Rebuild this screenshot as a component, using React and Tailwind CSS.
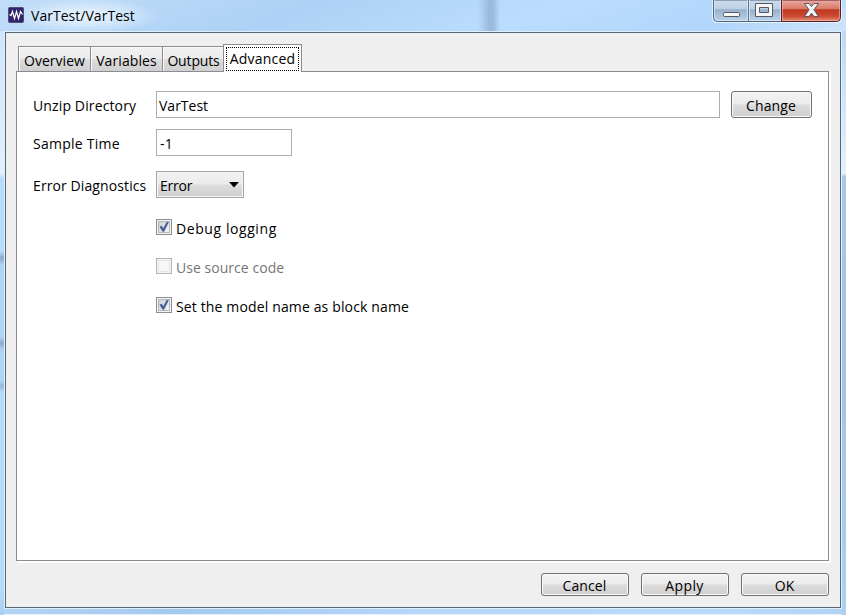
import React from "react";

function Tab({ label, className }) {
  return (
    <div className={`box-border flex h-[25px] items-center justify-center whitespace-nowrap border-t border-l border-[#898c95] bg-[linear-gradient(#f2f2f2,#ebebeb_48%,#dddddd_52%,#cfcfcf)] pt-[4px] shadow-[inset_1px_1px_0_#fafafa] ${className}`}>
      {label}
    </div>
  );
}

function Button({ children, className }) {
  return (
    <button className={`flex items-center justify-center rounded-[3px] border border-[#707070] bg-[linear-gradient(#f3f3f3,#ebebeb_49%,#dddddd_51%,#cfcfcf)] pr-px shadow-[inset_0_0_0_1px_#fafafa] ${className}`}>
      {children}
    </button>
  );
}

function Check({ checked, disabled }) {
  return (
    <span className={`block h-4 w-4 shrink-0 border bg-[#f4f4f4] p-px ${disabled ? "border-[#b1b5b8]" : "border-[#8e8f8f]"}`}>
      <svg width="12" height="12" viewBox="0 0 12 12" className="block">
        <defs>
          <linearGradient id="well" x1="0" y1="0" x2="1" y2="1">
            <stop offset="0" stopColor="#cbcfd5" />
            <stop offset="1" stopColor="#f6f6f6" />
          </linearGradient>
        </defs>
        <rect x=".5" y=".5" width="11" height="11" fill={disabled ? "#f8f8f8" : "url(#well)"} stroke={disabled ? "#e4e5e7" : "#b5bac2"} />
        {checked && <path d="M1.500 5.800 3.800 4.800 5.200 7.300 8.600 1 10.800 1.300 6 10.800H4.600Z" fill="#4a5f97" />}
      </svg>
    </span>
  );
}

export default function App() {
  return (
    <div className="flex h-[615px] w-[846px] flex-col overflow-hidden bg-[linear-gradient(90deg,#c5def7,#b9dcfd_30%,#b5dafd_60%,#b7d6f3)] font-['Open_Sans','Noto_Sans',sans-serif] text-[14px] leading-5 text-black">
      <header className="flex h-[31px] shrink-0 items-start bg-[radial-gradient(ellipse_75px_18px_at_85px_16px,#e3f1ff_20%,transparent),linear-gradient(90deg,transparent_478px,#9bbbdc_489px,#9bbbdc_493px,transparent_500px),linear-gradient(160deg,#c2ddf8,#add2f5_35%,#bbddfd_62%,#b1d6fb_85%,#d0e5fb)] pl-2">
        <svg width="16" height="16" viewBox="0 0 16 16" className="mt-[7px] shrink-0">
          <rect x=".5" y=".5" width="15" height="15" rx="1" fill="#30256a" stroke="#554b84" />
          <path d="M1.500 7.500 3 8.500 4.500 4.500 6.500 11.500 8.500 4.500 10.500 11.500 12.500 4.500 14.500 7.500" fill="none" stroke="#fff" strokeWidth="1.2" />
        </svg>
        <span className="ml-[7px] mt-[6px] tracking-[0.03px]">VarTest/VarTest</span>
        <svg width="130" height="24" viewBox="0 0 130 24" className="ml-auto mr-[4px]">
          <defs>
            <linearGradient id="glass" x1="0" y1="0" x2="0" y2="1">
              <stop offset="0" stopColor="#cbdceb" />
              <stop offset=".42" stopColor="#bdd1e5" />
              <stop offset=".45" stopColor="#98b1ca" />
              <stop offset="1" stopColor="#bcd3eb" />
            </linearGradient>
            <linearGradient id="danger" x1="0" y1="0" x2="0" y2="1">
              <stop offset="0" stopColor="#ebaaa0" />
              <stop offset=".42" stopColor="#d87969" />
              <stop offset=".45" stopColor="#bf3720" />
              <stop offset=".75" stopColor="#cc4930" />
              <stop offset="1" stopColor="#e39580" />
            </linearGradient>
          </defs>
          <path d="M.5 0V18Q.5 22.5 5 22.5H125Q129.500 22.500 129.500 18V0" fill="none" stroke="#e5f2ff" />
          <path d="M1.500 0V17.500Q1.500 21.500 5.500 21.500H69.500V0Z" fill="url(#glass)" stroke="#536579" />
          <path d="M69.500 0V21.500H124.500Q128.500 21.500 128.500 17.500V0Z" fill="url(#danger)" stroke="#55202a" />
          <path d="M2.500 0V17.500Q2.500 20.500 5.500 20.500H35.500V0M37.500 0V20.500H68.500V0" fill="none" stroke="#e0edf9" strokeOpacity=".7" />
          <path d="M70.500 0V20.500H124.500Q127.500 20.500 127.500 17.500V0" fill="none" stroke="#f5b5a5" strokeOpacity=".65" />
          <path d="M36.500 0V21" stroke="#63768e" />
          <rect x="11.500" y="12.500" width="16" height="4" rx="1" fill="#f7f7f7" stroke="#545869" />
          <path fillRule="evenodd" d="M43.500 3.500h17v13h-17ZM47.500 7.500v5h9v-5Z" fill="#f5f5f5" stroke="#545869" />
          <path d="M92.500 3.500h4.500l2.500 3 2.500-3h4.500l-4.500 6.300 4.500 6.700h-4.500l-2.500-3.300-2.500 3.300h-4.500l4.500-6.700Z" fill="#f4f4f4" stroke="#545869" />
        </svg>
      </header>

      <div className="flex h-[584px] bg-[linear-gradient(#cfe5fb,#e4f0fc_143px,#b9dcfd_147px,#b9dcfd_220px,#8eabc8_227px,#b1d4f6_234px,#b1d3f5_306px,#8eabc8_312px,#b1d4f6_319px,#b1d4f6_350px,#95b6d8_355px,#b8dafa_361px,#b7d9fa_560px,#abcff1)]">
        <div className="flex h-full w-[4px] shrink-0" />
        <div className="flex w-[838px] flex-col">
          <main className="flex h-[578px] w-[838px] shrink-0 flex-col border border-[#e0effc] bg-[#efefef]">
            <div className="flex h-[576px] flex-col border border-[#566778] pl-[10px]">
              <div className="mt-[11px] flex h-[27px] items-end pl-[2px]">
                <Tab label="Overview" className="w-[72px] tracking-[0.03px]" />
                <Tab label="Variables" className="w-[72px] tracking-[0.1px]" />
                <Tab label="Outputs" className="w-[61px] pl-px tracking-[-0.15px]" />
                <div className="z-10 -mb-px h-[28px] w-[79px] border border-b-0 border-[#898c95] bg-white p-[2px] pb-0">
                  <div className="flex h-[24px] w-[73px] items-center justify-center border border-dotted border-black tracking-[0.2px]">Advanced</div>
                </div>
              </div>
              <section className="box-content h-[488px] w-[811px] shrink-0 border border-[#898c95] bg-white shadow-[1px_1px_0_#fff,2px_2px_0_#fff]">
                <div className="flex flex-col pl-4 pt-[19px]">
                  <div className="flex h-[27px] items-center">
                    <label className="w-[123px] pt-[3px] tracking-[0.13px]">Unzip Directory</label>
                    <div className="flex h-[27px] w-[564px] items-center border border-[#abadb3] pl-[2px] pt-[3px]">VarTest</div>
                    <Button className="ml-[11px] h-[27px] w-[81px] pt-[3px] tracking-[0.1px]">Change</Button>
                  </div>
                  <div className="mt-[11px] flex h-[27px] items-center">
                    <label className="w-[123px] pt-[3px] tracking-[0.25px]">Sample Time</label>
                    <div className="flex h-[27px] w-[136px] items-center border border-[#abadb3] pl-[3px] pt-[3px] tracking-[0.2px]">-1</div>
                  </div>
                  <div className="mt-[15px] flex h-[27px] items-center">
                    <label className="w-[123px] whitespace-nowrap pt-[3px] tracking-[0.1px]">Error Diagnostics</label>
                    <div className="flex h-[27px] w-[88px] items-center justify-between border border-[#a5a7aa] bg-[linear-gradient(#f2f2f2,#ebebeb_48%,#dddddd_52%,#cfcfcf)] pl-[3px] pr-[4px] shadow-[inset_0_0_0_1px_#f5f5f5]">
                      <span className="pt-[3px] tracking-[-0.2px]">Error</span>
                      <svg width="10" height="6" viewBox="0 0 10 6"><path d="M0 0H10L5 5.500Z" /></svg>
                    </div>
                  </div>
                  <div className="mt-[21px] flex h-4 items-center gap-1 pl-[123px]">
                    <Check checked /><span className="pt-[3px] tracking-[0.58px]">Debug logging</span>
                  </div>
                  <div className="mt-[23px] flex h-4 items-center gap-1 pl-[123px] text-[#767676]">
                    <Check disabled /><span className="pt-[3px] tracking-[0.04px]">Use source code</span>
                  </div>
                  <div className="mt-[23px] flex h-4 items-center gap-1 pl-[123px]">
                    <Check checked /><span className="pt-[3px] tracking-[0.14px]">Set the model name as block name</span>
                  </div>
                </div>
              </section>
              <footer className="mt-[12px] flex h-[23px] gap-[12px] pl-[525px]">
                <Button className="h-[23px] w-[88px] pt-[3px] tracking-[0.1px]">Cancel</Button>
                <Button className="h-[23px] w-[88px] pt-[3px] tracking-[0.4px]">Apply</Button>
                <Button className="h-[23px] w-[88px] pt-[3px]">OK</Button>
              </footer>
            </div>
          </main>
          <div className="h-[5px] bg-[linear-gradient(90deg,#b3d5f5,#a5c9ee_20%,#b4d7fa_50%,#b9dcfd_85%,#b4d3f2)]" />
          <div className="h-px bg-[#e5f1fc]" />
        </div>
        <div className="h-full w-[4px] bg-[linear-gradient(#bddaf6,#e6f0fb_142px,#a8c8e8_146px,#a5c4e4_350px,#add1f4)]" />
      </div>
    </div>
  );
}
